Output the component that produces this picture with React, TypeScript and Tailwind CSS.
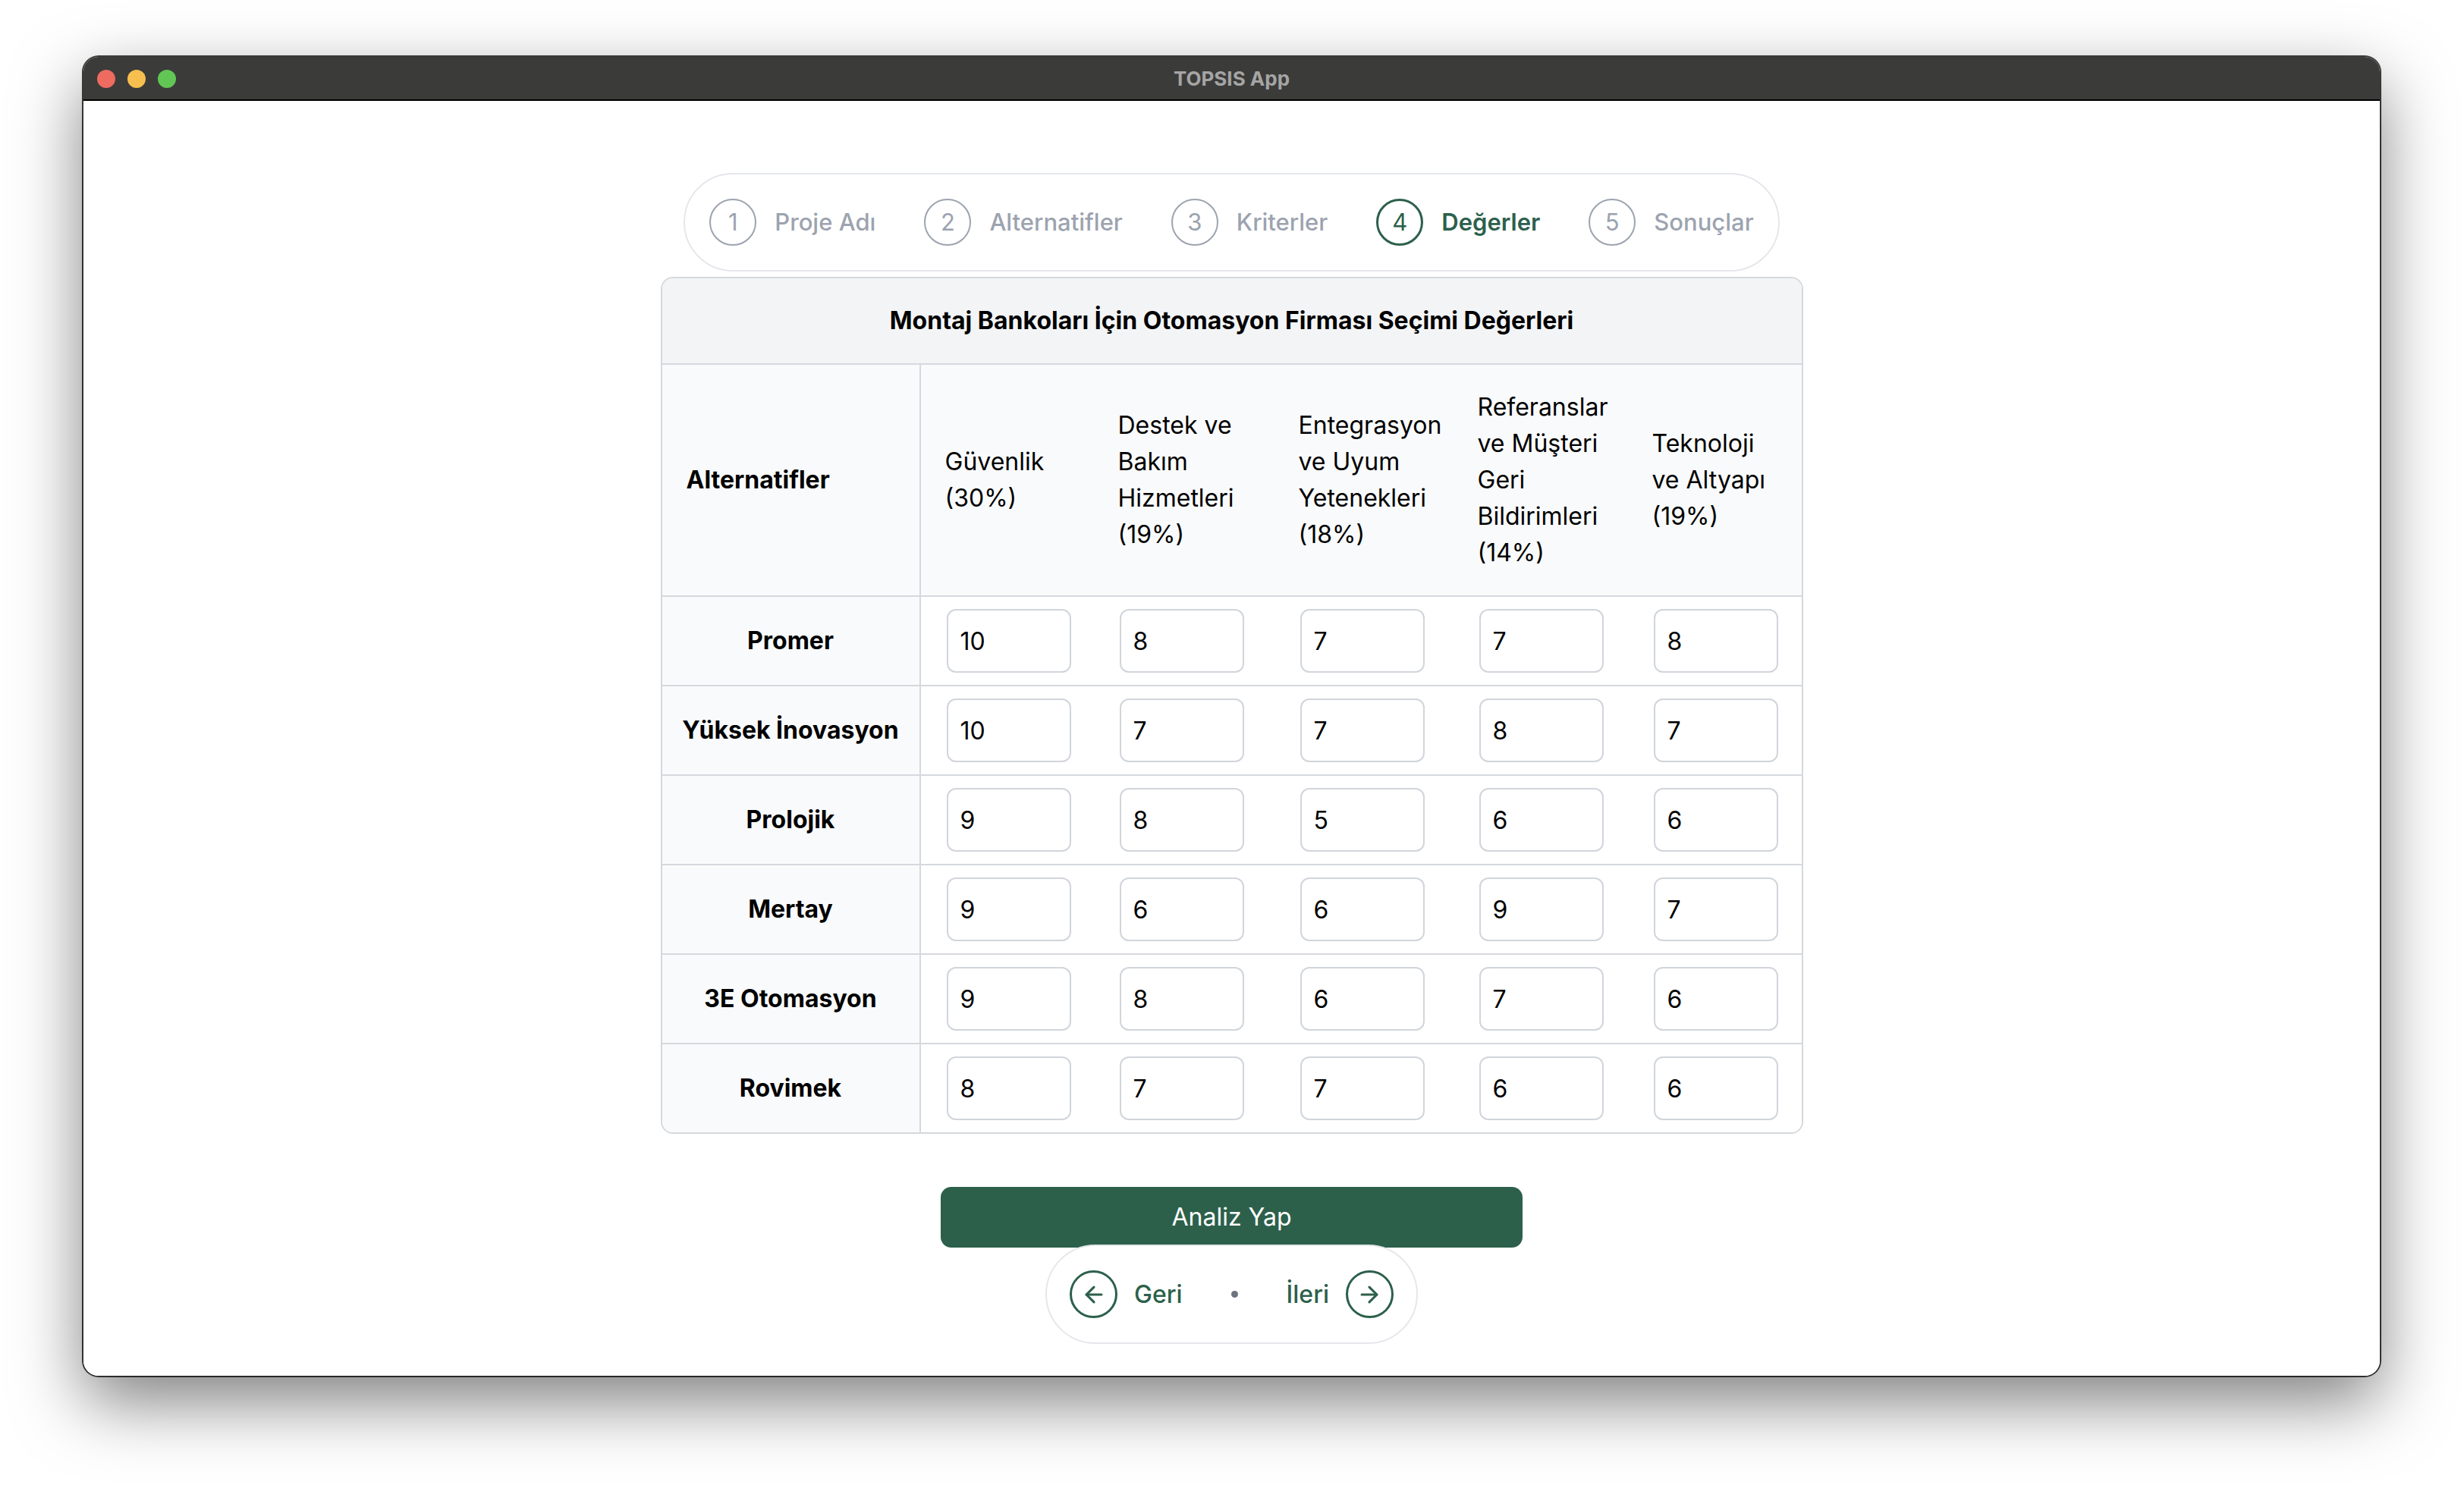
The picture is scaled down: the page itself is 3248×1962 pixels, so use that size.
import React from "react";
import { ArrowLeft, ArrowRight } from "lucide-react";

const steps = [
  { n: 1, label: "Proje Adı", active: false },
  { n: 2, label: "Alternatifler", active: false },
  { n: 3, label: "Kriterler", active: false },
  { n: 4, label: "Değerler", active: true },
  { n: 5, label: "Sonuçlar", active: false },
];

const criteria = [
  ["Güvenlik", "(30%)"],
  ["Destek ve", "Bakım", "Hizmetleri", "(19%)"],
  ["Entegrasyon", "ve Uyum", "Yetenekleri", "(18%)"],
  ["Referanslar", "ve Müşteri", "Geri", "Bildirimleri", "(14%)"],
  ["Teknoloji", "ve Altyapı", "(19%)"],
];

const rows: [string, string[]][] = [
  ["Promer", ["10", "8", "7", "7", "8"]],
  ["Yüksek İnovasyon", ["10", "7", "7", "8", "7"]],
  ["Prolojik", ["9", "8", "5", "6", "6"]],
  ["Mertay", ["9", "6", "6", "9", "7"]],
  ["3E Otomasyon", ["9", "8", "6", "7", "6"]],
  ["Rovimek", ["8", "7", "7", "6", "6"]],
];

function Stepper() {
  return (
    <div className="flex h-[130px] items-center gap-[64px] rounded-full border-2 border-[#e5e7eb] px-[32px]">
      {steps.map((s) => (
        <div key={s.n} className="flex items-center gap-[24px]">
          <div
            className={
              s.active
                ? "flex h-[62px] w-[62px] items-center justify-center rounded-full border-[3px] border-[#2c604b] text-[31px] text-[#2c604b]"
                : "flex h-[62px] w-[62px] items-center justify-center rounded-full border-2 border-[#9ca3af] text-[31px] text-[#9ca3af]"
            }
          >
            {s.n}
          </div>
          <span
            className={
              s.active
                ? "text-[31px] font-semibold text-[#2c604b]"
                : "text-[31px] font-medium text-[#9ca3af]"
            }
          >
            {s.label}
          </span>
        </div>
      ))}
    </div>
  );
}

function ValuesTable() {
  return (
    <div className="mt-[7px] w-[1506px] overflow-hidden rounded-[16px] border-2 border-[#d5d8dd]">
      <table className="w-full table-fixed border-separate border-spacing-0 text-[32px] leading-[48px] text-black">
        <colgroup>
          <col className="w-[341px]" />
          <col className="w-[228px]" />
          <col className="w-[238px]" />
          <col className="w-[236px]" />
          <col className="w-[230px]" />
          <col className="w-[229px]" />
        </colgroup>
        <thead>
          <tr>
            <th
              colSpan={6}
              className="border-b-2 border-[#d5d8dd] bg-[#f3f4f6] py-[32px] text-center font-bold"
            >
              Montaj Bankoları İçin Otomasyon Firması Seçimi Değerleri
            </th>
          </tr>
          <tr className="bg-[#f9fafb]">
            <th className="border-b-2 border-r-2 border-[#d5d8dd] px-[32px] py-[32px] text-left align-middle font-bold">
              Alternatifler
            </th>
            {criteria.map((c, i) => (
              <th
                key={i}
                className="border-b-2 border-[#d5d8dd] py-[32px] pl-[32px] pr-[8px] text-left align-middle font-normal"
              >
                {c.map((l, j) => (
                  <div key={j}>{l}</div>
                ))}
              </th>
            ))}
          </tr>
        </thead>
        <tbody>
          {rows.map(([name, vals], ri) => {
            const last = ri === rows.length - 1;
            return (
              <tr key={name}>
                <td
                  className={
                    last
                      ? "border-r-2 border-[#d5d8dd] bg-[#f9fafb] px-[16px] text-center align-middle font-bold"
                      : "border-b-2 border-r-2 border-[#d5d8dd] bg-[#f9fafb] px-[16px] text-center align-middle font-bold"
                  }
                >
                  {name}
                </td>
                {vals.map((v, vi) => (
                  <td
                    key={vi}
                    className={
                      last
                        ? "bg-white py-[16px] pl-[34px] align-middle"
                        : "border-b-2 border-[#d5d8dd] bg-white py-[16px] pl-[34px] align-middle"
                    }
                  >
                    <input
                      type="text"
                      defaultValue={v}
                      className="block h-[84px] w-[164px] rounded-[12px] border-2 border-[#d1d5db] bg-white px-[16px] text-[32px] text-black outline-none"
                    />
                  </td>
                ))}
              </tr>
            );
          })}
        </tbody>
      </table>
    </div>
  );
}

function Nav() {
  return (
    <div className="-mt-[4px] flex h-[131px] items-center rounded-full border-2 border-[#e5e7eb] bg-white px-[30px]">
      <div className="flex items-center gap-[22px]">
        <div className="flex h-[63px] w-[63px] items-center justify-center rounded-full border-[3px] border-[#2c604b] text-[#2c604b]">
          <ArrowLeft size={34} strokeWidth={2.2} />
        </div>
        <span className="text-[32px] font-medium text-[#2c604b]">Geri</span>
      </div>
      <span className="mx-[64px] h-[9px] w-[9px] rounded-full bg-[#6b7280]" />
      <div className="flex items-center gap-[22px]">
        <span className="text-[32px] font-medium text-[#2c604b]">İleri</span>
        <div className="flex h-[63px] w-[63px] items-center justify-center rounded-full border-[3px] border-[#2c604b] text-[#2c604b]">
          <ArrowRight size={34} strokeWidth={2.2} />
        </div>
      </div>
    </div>
  );
}

export default function App() {
  return (
    <div className="min-h-[1962px] w-[3248px] bg-white pl-[110px] pt-[75px] font-['Inter','Noto_Sans',sans-serif]">
      <div className="flex h-[1739px] w-[3027px] flex-col overflow-hidden rounded-[20px] bg-white shadow-[0_0_0_2px_rgba(0,0,0,0.75),0_34px_90px_rgba(0,0,0,0.5)]">
        <div className="relative flex h-[58px] shrink-0 items-center justify-center border-b-2 border-black bg-[#3b3b3a]">
          <div className="absolute left-[18px] top-[17px] flex gap-[16px]">
            <span className="h-[24px] w-[24px] rounded-full bg-[#ee6b60]" />
            <span className="h-[24px] w-[24px] rounded-full bg-[#f6bf4f]" />
            <span className="h-[24px] w-[24px] rounded-full bg-[#62c655]" />
          </div>
          <span className="text-[26px] font-bold text-[#a5a5a5]">TOPSIS App</span>
        </div>
        <div className="flex flex-1 flex-col items-center bg-white pt-[95px]">
          <Stepper />
          <ValuesTable />
          <button className="mt-[70px] h-[80px] w-[767px] rounded-[14px] bg-[#2c604b] text-[32px] text-white">
            Analiz Yap
          </button>
          <Nav />
        </div>
      </div>
    </div>
  );
}
